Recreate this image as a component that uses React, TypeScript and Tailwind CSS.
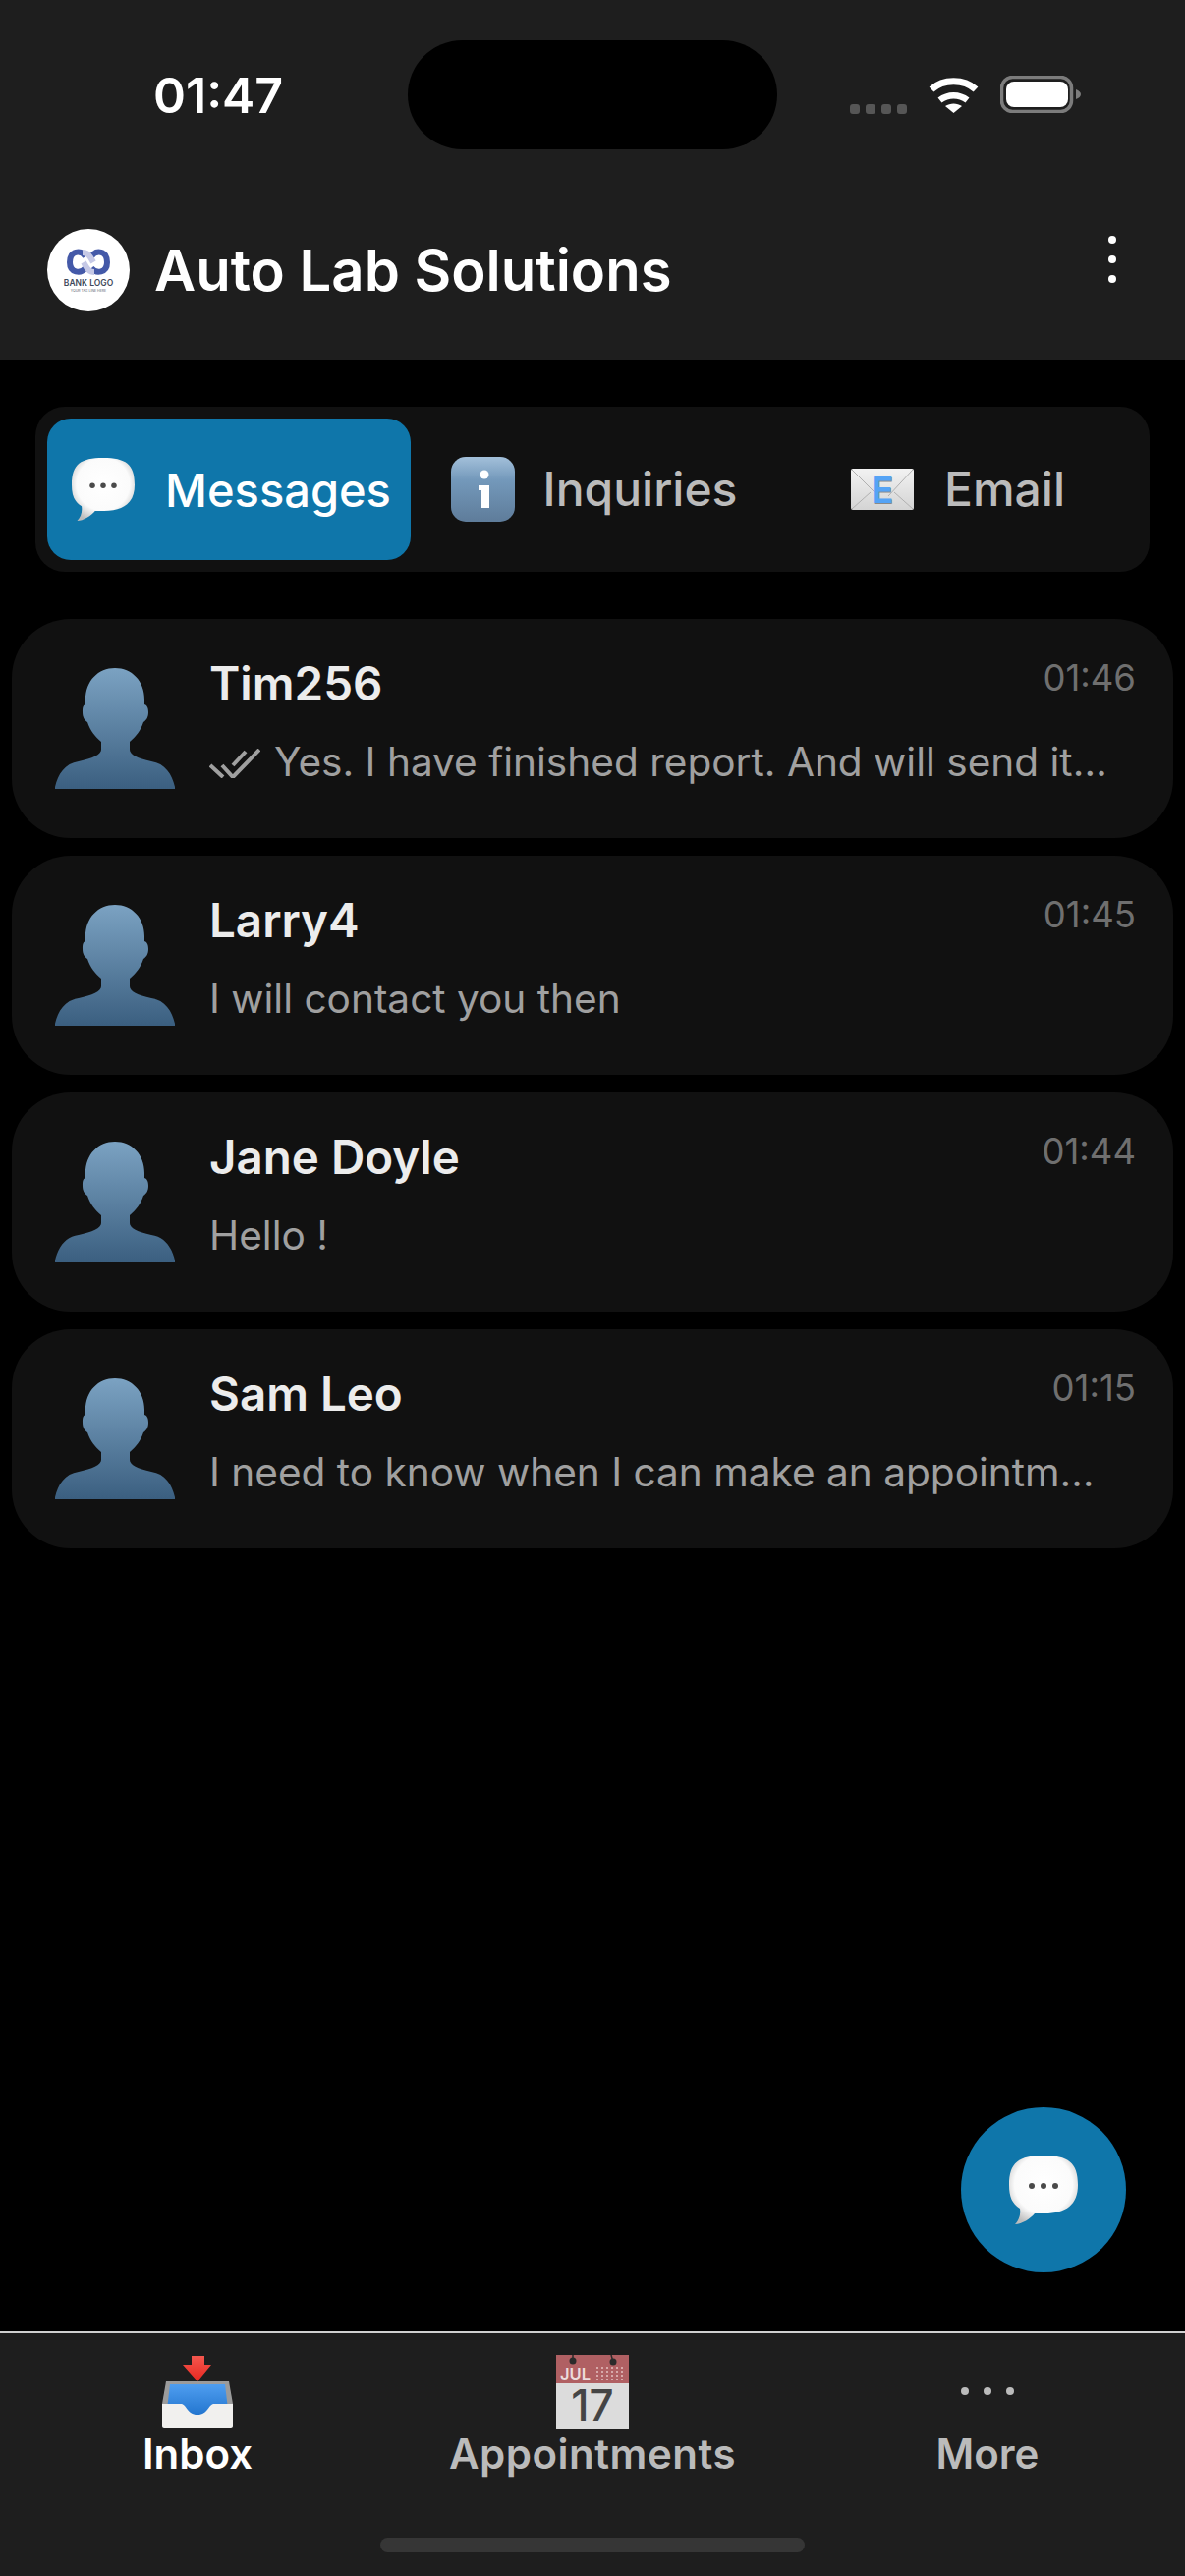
import React from 'react';

const Bubble: React.FC<{ size: number; id: string }> = ({ size, id }) => (
  <svg width={size} height={size} viewBox="0 0 70 70">
    <defs>
      <radialGradient id={id} cx="50%" cy="42%" r="62%">
        <stop offset="0%" stopColor="#ffffff" />
        <stop offset="68%" stopColor="#fbfbfb" />
        <stop offset="100%" stopColor="#bdbdbd" />
      </radialGradient>
    </defs>
    <path d="M35 0C60 0 70 7 70 30C70 50 58 59 36 59L26 59C22 64 13 70 6 70C10 66 12 60 11 54C3 49 0 42 0 30C0 7 10 0 35 0Z" fill={`url(#${id})`} />
    <circle cx="23" cy="31" r="3" fill="#4a4a4a" />
    <circle cx="35" cy="31" r="3" fill="#4a4a4a" />
    <circle cx="47" cy="31" r="3" fill="#4a4a4a" />
  </svg>
);

const InfoIcon: React.FC = () => (
  <svg width="65" height="66" viewBox="0 0 65 66">
    <defs>
      <linearGradient id="info" x1="0" y1="0" x2="0" y2="1">
        <stop offset="0%" stopColor="#a3c0da" />
        <stop offset="35%" stopColor="#7499bb" />
        <stop offset="100%" stopColor="#5e7c9a" />
      </linearGradient>
    </defs>
    <rect x="0" y="0" width="65" height="66" rx="15" fill="url(#info)" />
    <circle cx="34" cy="18" r="4.500" fill="#fff" />
    <path d="M28 29H39V52H31V34H28Z" fill="#fff" />
  </svg>
);

const MailIcon: React.FC = () => (
  <svg width="64" height="42" viewBox="0 0 64 42" className="overflow-visible">
    <defs>
      <linearGradient id="mail" x1="0" y1="0" x2="0" y2="1">
        <stop offset="0%" stopColor="#f2f2f2" />
        <stop offset="100%" stopColor="#d4d4d4" />
      </linearGradient>
    </defs>
    <rect x="0" y="0" width="64" height="42" rx="2" fill="url(#mail)" />
    <path d="M1 1L24 24M63 1L38 28M1 41L20 24M63 41L44 24" stroke="#b0b0b0" strokeWidth="1" fill="none" />
    <text x="32.500" y="36" textAnchor="middle" fontFamily="Inter, sans-serif" fontWeight="700" fontSize="37" fill="#8a8a8a">E</text>
    <text x="32" y="35" textAnchor="middle" fontFamily="Inter, sans-serif" fontWeight="700" fontSize="37" fill="#55a3f5">E</text>
  </svg>
);

const Silhouette: React.FC<{ id: string }> = ({ id }) => (
  <svg width="122" height="123" viewBox="0 0 122 123" className="shrink-0">
    <defs>
      <linearGradient id={id} x1="0" y1="0" x2="0" y2="1">
        <stop offset="0%" stopColor="#7ba2c2" />
        <stop offset="100%" stopColor="#3b5f80" />
      </linearGradient>
    </defs>
    <path
      d="M61 0C44 0 31 13 31 32L31 37C28 38 28 41 28 45C28 50 30 53 33 55C36 64 41 70 47 75L47 83C47 88 38 92 24 95C10 97 3 108 0 121L0 123L122 123L122 121C119 108 112 97 98 95C84 92 76 88 76 83L76 75C82 70 87 64 90 55C93 53 95 50 95 45C95 41 94 38 91 37L91 32C91 13 78 0 61 0Z"
      fill={`url(#${id})`}
    />
  </svg>
);

const Logo: React.FC = () => (
  <svg width="84" height="84" viewBox="0 0 84 84" className="shrink-0">
    <circle cx="42" cy="42" r="42" fill="#fff" />
    <g transform="translate(0 3)">
      <path d="M39 25C34 18 23 19 23 31C23 42 34 43 39 37" stroke="#4459a8" strokeWidth="6" fill="none" />
      <path d="M45 25C50 18 61 19 61 31C61 42 50 43 45 37" stroke="#4459a8" strokeWidth="6" fill="none" />
      <path d="M36 21C42 21 44 26 47 31M48 41C42 41 40 36 37 31" stroke="#c6c9e6" strokeWidth="6" fill="none" />
    </g>
    <text x="42" y="58" textAnchor="middle" fontFamily="Inter, sans-serif" fontWeight="600" fontSize="8.500" fill="#3f4a5c">BANK LOGO</text>
    <text x="42" y="64" textAnchor="middle" fontFamily="Inter, sans-serif" fontSize="3.500" fill="#5a6270">YOUR TAG LINE HERE</text>
  </svg>
);

const InboxIcon: React.FC = () => (
  <svg width="74" height="75" viewBox="0 0 74 75">
    <defs>
      <linearGradient id="arrow" x1="0" y1="0" x2="0" y2="1">
        <stop offset="0%" stopColor="#f4574e" />
        <stop offset="100%" stopColor="#e8261f" />
      </linearGradient>
      <linearGradient id="tray" x1="0" y1="0" x2="0" y2="1">
        <stop offset="0%" stopColor="#4f9ef0" />
        <stop offset="100%" stopColor="#1f72cc" />
      </linearGradient>
    </defs>
    <path d="M31 1H44V10H51L37 27L22 10H31Z" fill="url(#arrow)" />
    <path d="M5 27H69L73 50V72H1V50Z" fill="#9b9b9b" />
    <path d="M9 30H65L69 64H5Z" fill="url(#tray)" />
    <path d="M1 50H20C26 50 26 61 37 61C48 61 48 50 54 50H73V72C73 73 72 74 71 74H3C2 74 1 73 1 72Z" fill="#f1f0ee" />
  </svg>
);

const CalendarIcon: React.FC = () => (
  <svg width="74" height="75" viewBox="0 0 74 75" className="overflow-visible">
    <rect x="0" y="0" width="74" height="75" fill="#dcdcdc" />
    <rect x="0" y="0" width="74" height="29" fill="#b06063" />
    <path d="M17 0V6M56 0L58 7" stroke="#2b2b2b" strokeWidth="1.500" />
    <circle cx="17" cy="6" r="3.500" fill="#2b2b2b" />
    <circle cx="58" cy="7" r="3.500" fill="#2b2b2b" />
    <text x="4" y="25" fontFamily="Inter, sans-serif" fontSize="16.500" fill="#ecdcdc">JUL</text>
    <path d="M41 13H70M41 17H70M41 21H70M41 25H70" stroke="#d7a9aa" strokeWidth="2" strokeDasharray="2 3" />
    <text x="37" y="67" textAnchor="middle" fontFamily="Inter, sans-serif" fontSize="44" fontWeight="500" fill="#454545">17</text>
  </svg>
);

const Tab: React.FC<{ icon: React.ReactNode; label: string; active?: boolean; gap: string; extra?: string }> = ({ icon, label, active, gap, extra }) => (
  <div className={`w-[370px] ${gap} ${extra ?? ''} h-full flex items-center justify-center rounded-[24px] ${active ? 'bg-[#0f76aa] text-white text-[47px]' : 'text-[#bbbbbb] text-[48px]'}`}>
    {icon}
    <span className="font-medium leading-none">{label}</span>
  </div>
);

const chats = [
  { name: 'Tim256', time: '01:46', text: 'Yes. I have finished report. And will send it…', read: true },
  { name: 'Larry4', time: '01:45', text: 'I will contact you then' },
  { name: 'Jane Doyle', time: '01:44', text: 'Hello !' },
  { name: 'Sam Leo', time: '01:15', text: 'I need to know when I can make an appointm…' },
];

export default function App() {
  return (
    <div className="w-[1206px] h-[2622px] flex flex-col bg-black font-['Inter',sans-serif] overflow-hidden">
      <header className="h-[366px] shrink-0 bg-[#1e1e1e] pt-[41px]">
        <div className="flex items-start h-[111px]">
          <div className="w-[415px] h-full pl-[156px] flex items-center text-white text-[50px] font-semibold leading-none">01:47</div>
          <div className="w-[376px] h-full rounded-[56px] bg-black" />
          <div className="flex items-start pt-[37px] pl-[74px]">
            <div className="flex gap-[6px] mt-[28px]">
              <div className="w-[10px] h-[10px] rounded-[3px] bg-[#565656]" />
              <div className="w-[10px] h-[10px] rounded-[3px] bg-[#565656]" />
              <div className="w-[10px] h-[10px] rounded-[3px] bg-[#565656]" />
              <div className="w-[10px] h-[10px] rounded-[3px] bg-[#565656]" />
            </div>
            <svg width="51" height="37" viewBox="0 0 51 37" className="ml-[22px]">
              <path d="M3 13C15 2 36 2 48 13" stroke="#fff" strokeWidth="7" fill="none" />
              <path d="M11.500 24C20 17.500 31 17.500 39.500 24" stroke="#fff" strokeWidth="6.500" fill="none" />
              <path d="M25.500 37L17 30C22 26.500 29 26.500 34 30Z" fill="#fff" />
            </svg>
            <svg width="82" height="38" viewBox="0 0 82 38" className="ml-[22px] -mt-[1px]">
              <rect x="1.500" y="1.500" width="71" height="35" rx="11" stroke="#7c7c7c" strokeWidth="3.500" fill="none" />
              <rect x="6" y="6" width="63" height="26" rx="8" fill="#fff" />
              <path d="M77 14C80 15 82 17 82 19C82 21 80 23 77 24Z" fill="#7c7c7c" />
            </svg>
          </div>
        </div>
        <div className="flex items-center justify-between mt-[81px] pl-[48px] pr-[70px]">
          <div className="flex items-center gap-[25px]">
            <Logo />
            <span className="text-white text-[58px] font-semibold leading-none">Auto Lab Solutions</span>
          </div>
          <div className="flex flex-col gap-[12px] -mt-[22px]">
            <div className="w-[8px] h-[8px] rounded-full bg-white" />
            <div className="w-[8px] h-[8px] rounded-full bg-white" />
            <div className="w-[8px] h-[8px] rounded-full bg-white" />
          </div>
        </div>
      </header>

      <main className="relative flex-1 pt-[48px]">
        <div className="mx-[36px] h-[168px] p-[12px] rounded-[30px] bg-[#111111] flex">
          <Tab gap="gap-[31px]" extra="pl-[5px]" active label="Messages" icon={<Bubble size={64} id="tab-bubble" />} />
          <Tab gap="gap-[29px]" extra="pl-[3px]" label="Inquiries" icon={<InfoIcon />} />
          <Tab gap="gap-[31px]" extra="pl-[4px]" label="Email" icon={<MailIcon />} />
        </div>

        <div className="mt-[48px] px-[12px] flex flex-col gap-[18px]">
          {chats.map((chat, i) => (
            <div key={chat.name} className="h-[223px] rounded-[60px] bg-[#111111] flex items-center pl-[44px] pr-[38px] gap-[35px]">
              <Silhouette id={`avatar-${i}`} />
              <div className="flex-1 min-w-0 pb-[14px]">
                <div className="flex justify-between items-start">
                  <span className="text-[#ececec] text-[47.5px] font-semibold leading-none">{chat.name}</span>
                  <span className="text-[#6f6f6f] text-[36.5px] leading-none">{chat.time}</span>
                </div>
                <div className="flex items-center gap-[14px] mt-[37px] text-[#a0a0a0] text-[40.6px] leading-none whitespace-nowrap">
                  {chat.read && (
                    <svg width="52" height="30" viewBox="0 0 52 30" className="shrink-0">
                      <path d="M1 17L14 29M13 17L24 29L51 1" stroke="#a0a0a0" strokeWidth="4" fill="none" />
                      <path d="M24 17L37 3" stroke="#a0a0a0" strokeWidth="4" fill="none" />
                    </svg>
                  )}
                  <span>{chat.text}</span>
                </div>
              </div>
            </div>
          ))}
        </div>

        <div className="absolute right-[60px] bottom-[60px] w-[168px] h-[168px] rounded-full bg-[#0f76aa] flex items-center justify-center">
          <Bubble size={70} id="fab-bubble" />
        </div>
      </main>

      <nav className="h-[249px] shrink-0 bg-[#1e1e1e] border-t-2 border-[#cfcfcf] pt-[22px] flex flex-col">
        <div className="grid grid-cols-3 text-[42px] font-semibold leading-none text-[#bbbbbb]">
          <div className="flex flex-col items-center gap-[5px] text-white">
            <InboxIcon />
            <span>Inbox</span>
          </div>
          <div className="flex flex-col items-center gap-[5px]">
            <CalendarIcon />
            <span className="tracking-[0.5px]">Appointments</span>
          </div>
          <div className="flex flex-col items-center gap-[5px]">
            <div className="h-[75px] flex gap-[15px] items-start pt-[33px]">
              <div className="w-[8px] h-[8px] rounded-full bg-[#bbbbbb]" />
              <div className="w-[8px] h-[8px] rounded-full bg-[#bbbbbb]" />
              <div className="w-[8px] h-[8px] rounded-full bg-[#bbbbbb]" />
            </div>
            <span>More</span>
          </div>
        </div>
        <div className="mt-auto mb-[24px] mx-auto w-[432px] h-[15px] rounded-full bg-[#363636]" />
      </nav>
    </div>
  );
}
